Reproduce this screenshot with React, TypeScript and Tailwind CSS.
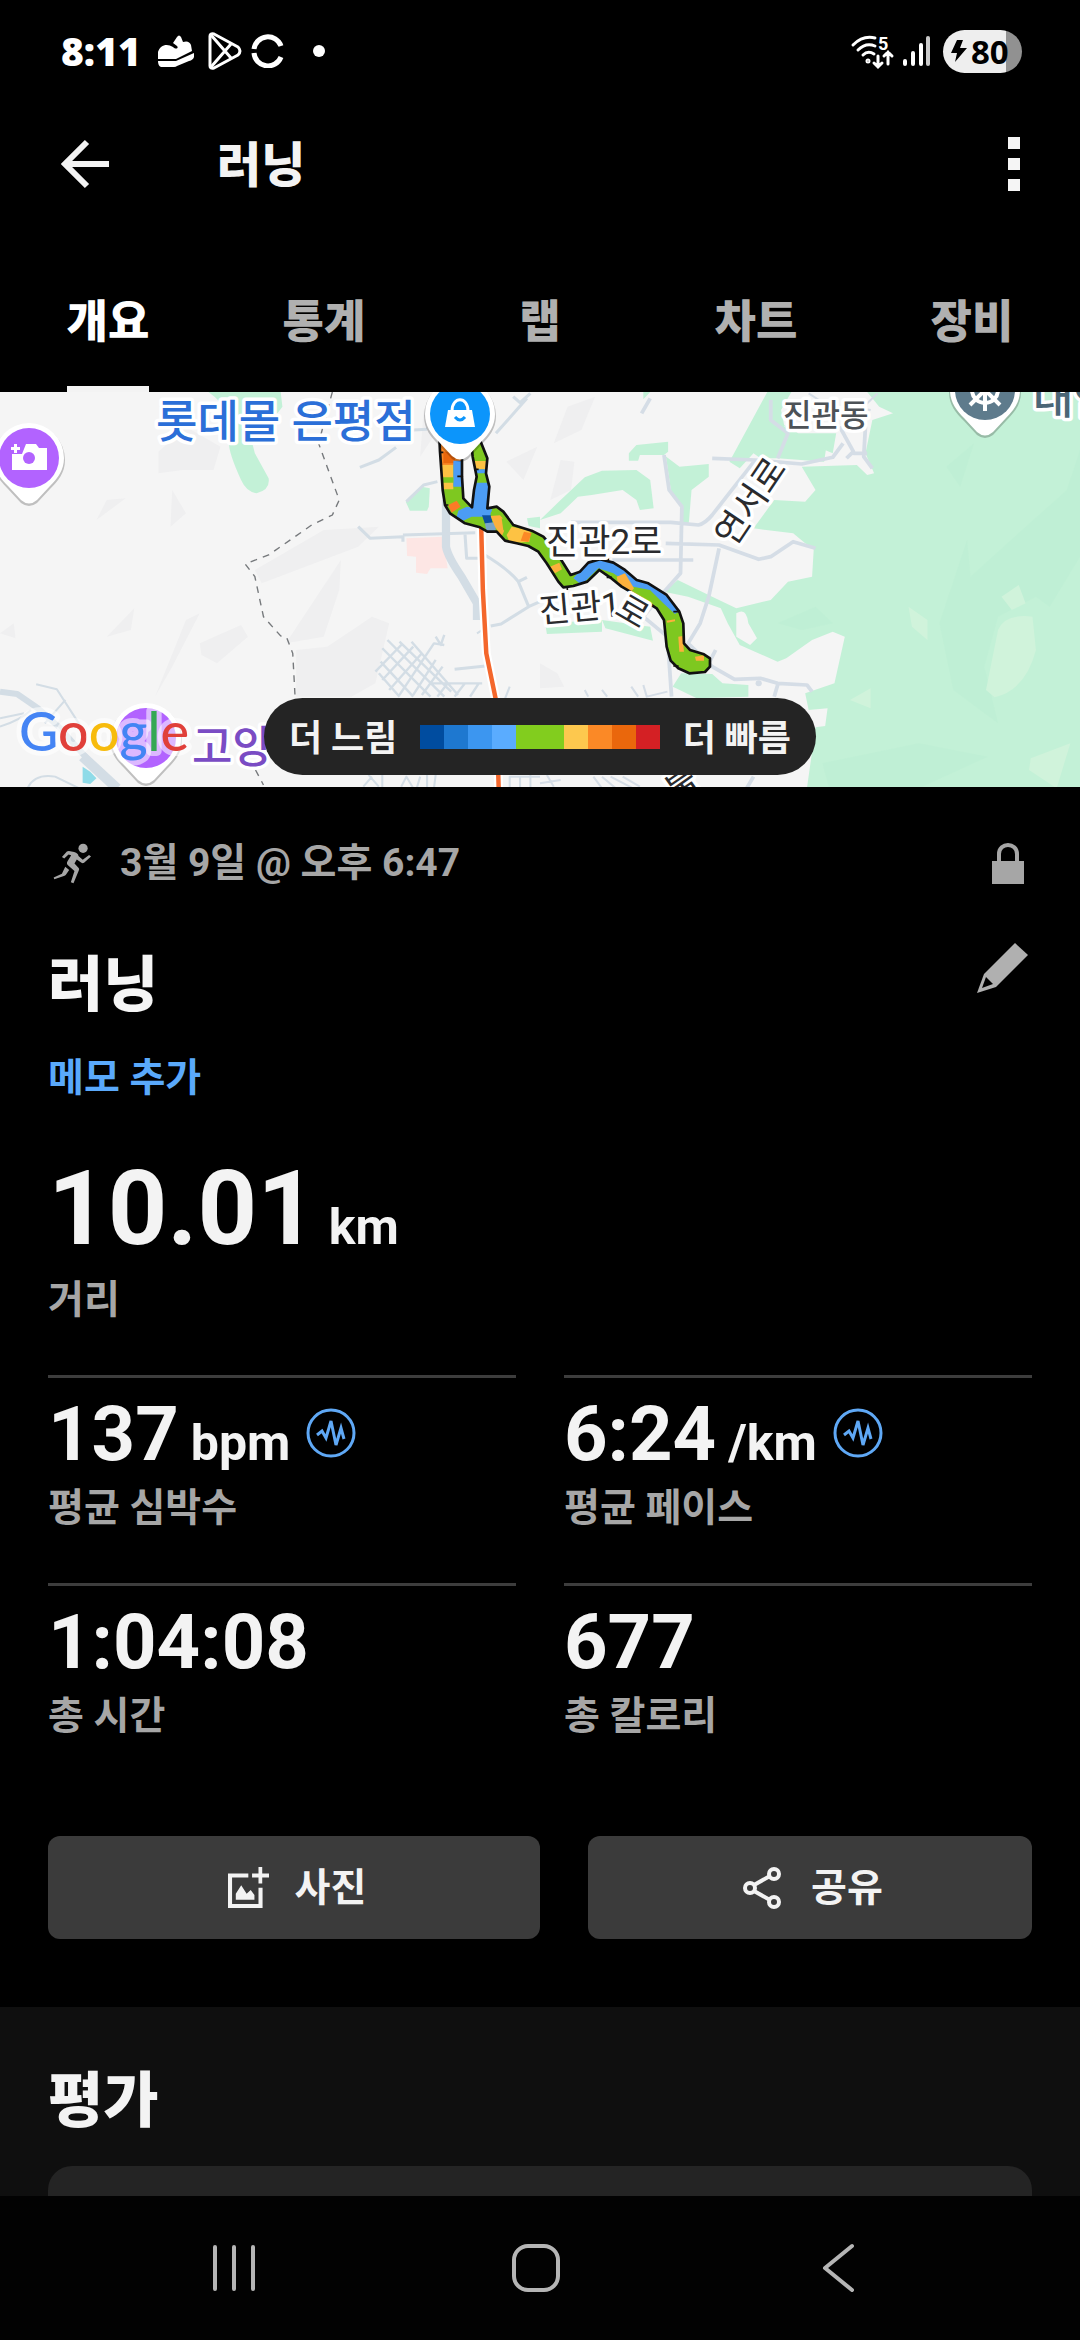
import React from "react";

const FONT = "font-['Roboto','Noto_Sans_CJK_KR',sans-serif]";

const TABS = ["개요", "통계", "랩", "차트", "장비"];

function StatusBar() {
  return (
    <header className="flex h-[102px] items-center justify-between pl-[61px] pr-[58px] text-white">
      <div className="flex items-center">
        <span className="font-['Open_Sans','Noto_Sans_CJK_KR',sans-serif] text-[39px] leading-[48px] font-extrabold">8:11</span>
        <svg className="ml-4 h-[32px] w-[38px]" viewBox="0 0 38 32" fill="currentColor" aria-hidden="true">
          <path d="M1 24V17C3 10 10 8 16 12C19 15 22 13 20 11L16 8L20 2Q22-1 24 2L26 7Q32 5 34 10L35 16L19 24Z" />
          <path d="M1 26H19L37 18V22Q36 25 32 26L20 31Q19 32 17 32H4Q1 31 1 26Z" />
        </svg>
        <svg className="ml-3 h-[40px] w-[36px]" viewBox="0 0 36 40" fill="none" stroke="currentColor" strokeWidth="3" strokeLinejoin="round" aria-hidden="true">
          <path d="M3 5Q3 2 7 3L31 16Q35 20 31 24L7 37Q3 38 3 35Z" />
          <path d="M4 4L24 27M4 36L24 13" />
        </svg>
        <svg className="ml-2 h-[34px] w-[34px]" viewBox="0 0 34 34" fill="none" stroke="currentColor" strokeWidth="5" aria-hidden="true">
          <path d="M3 15A14 14 0 0 1 30 12M3 19A14 14 0 0 0 30 23" />
        </svg>
        <span className="ml-7 size-3 rounded-full bg-white" />
      </div>
      <div className="flex items-center">
        <svg className="h-[34px] w-[42px] overflow-visible" viewBox="0 0 42 34" fill="none" stroke="currentColor" strokeLinecap="round" strokeWidth="3" aria-hidden="true">
          <path d="M2 11Q12 1 24 4M7 16Q15 8 24 12M12 21Q17 16 23 20" />
          <circle cx="17" cy="27" r="1" />
          <path d="M27 22V32M23 29L27 33L31 29M37 30V18M33 22L37 18L41 22" strokeWidth="3" />
          <text x="27" y="16" fontSize="18" fontWeight="700" fill="currentColor" stroke="none">5</text>
        </svg>
        <svg className="ml-2 h-[32px] w-[30px]" viewBox="0 0 30 32" fill="none" stroke="currentColor" strokeWidth="4" strokeLinecap="round" aria-hidden="true">
          <path d="M4 26V29M12 18V29M20 10V29" />
          <path d="M27 3V29" stroke="#c9c9c9" />
        </svg>
        <div className="ml-3 flex h-[43px] w-[79px] items-center overflow-hidden rounded-full bg-[linear-gradient(90deg,#eeeeee_80%,#919191_80%)] pl-2 text-black">
          <svg className="h-[24px] w-[16px]" viewBox="0 0 16 24" fill="currentColor" aria-hidden="true">
            <path d="M6 1H12L9 9H16L4 23L6 14H0Z" />
          </svg>
          <span className="ml-1 font-['Open_Sans',sans-serif] text-[33px] leading-[43px] font-bold">80</span>
        </div>
      </div>
    </header>
  );
}

function AppBar() {
  return (
    <div className="flex h-[124px] items-center pl-[60px] pr-[60px] text-[#f3f3f3]">
      <button type="button" aria-label="뒤로">
        <svg className="block h-[50px] w-[50px]" viewBox="0 0 50 50" fill="none" stroke="currentColor" strokeWidth="6" aria-hidden="true">
          <path d="M49 25H6M27 3L5 25L27 47" />
        </svg>
      </button>
      <h1 className="ml-[107px] flex-1 pt-1 text-[48px] leading-[60px] font-black">러닝</h1>
      <button type="button" aria-label="더보기" className="flex flex-col gap-[9px]">
        <span className="size-3 bg-[#f5f5f5]" />
        <span className="size-3 bg-[#f5f5f5]" />
        <span className="size-3 bg-[#f5f5f5]" />
      </button>
    </div>
  );
}

function Tabs() {
  return (
    <nav className="flex h-[166px]">
      {TABS.map((t, i) => (
        <button
          key={t}
          type="button"
          aria-current={i === 0 ? "page" : undefined}
          className={
            i === 0
              ? "flex flex-1 flex-col items-center text-[45px] leading-[56px] font-black text-white"
              : "flex flex-1 flex-col items-center text-[45px] leading-[56px] font-black text-[#b0b0b0]"
          }
        >
          <span className={i === 0 ? "flex h-full flex-col justify-between border-b-[6px] border-[#f3f3f3] pt-[69px]" : "pt-[69px]"}>{t}</span>
        </button>
      ))}
    </nav>
  );
}

function Pin({ x, y, color, children }: { x: number; y: number; color: string; children?: React.ReactNode }) {
  return (
    <g transform={`translate(${x} ${y})`}>
      <path d="M-36 2a36 36 0 1 1 72 0c0 13-7 21-15 29L8 45Q0 51-8 45L-21 31C-29 23-36 15-36 2z" fill="#000" opacity=".22" />
      <path d="M-35 0a35 35 0 1 1 70 0c0 12-6 20-14 28L8 42Q0 49-8 42L-21 28C-29 20-35 12-35 0z" fill="#fff" />
      <circle r="30" fill={color} />
      {children}
    </g>
  );
}

const ROUTE =
  "M118 140L120 185L125 255L128 300L135 345L150 370L195 400L240 412L262 425L290 425L315 452L350 460L385 468L415 485L440 520L475 575L490 592L520 588L562 575L598 540L630 562L665 590L720 622L770 655L792 690L800 770L812 812L835 835L868 850L915 846L930 830L930 805L912 793L870 780L852 760L850 700L838 665L800 615L745 580L710 570L675 540L640 518L600 508L565 518L540 545L512 555L490 520L465 480L430 440L395 422L340 405L310 365L290 350L262 355L268 290L258 250L262 205L240 150ZM186 150L186 260L190 325L216 352L222 300L230 260L218 200L214 160Z";

function RouteMap() {
  return (
    <svg className="block h-[395px] w-full" viewBox="0 0 1080 395" preserveAspectRatio="xMidYMid slice" role="img" aria-label="러닝 경로 지도">
      <defs>
        <clipPath id="route">
          <path d={ROUTE} clipRule="evenodd" />
        </clipPath>
      </defs>
      <rect width="1080" height="395" fill="#f5f5f5" />

      {/* western half: hill shading, parks, streets */}
      <g transform="translate(0 -2) scale(0.3444 0.3333)">
        <g fill="#efeff0">
          <path d="M460 185L540 110L640 170L620 240L530 240L460 250ZM280 390L310 330L365 325ZM500 300L540 370L495 410ZM310 740L390 655L380 720ZM450 920L540 690L580 670L500 830ZM580 760L700 705L720 740L630 820L585 795ZM830 760L900 650L990 510L985 600L940 740ZM860 780L950 770L1080 680L1130 700L1090 880L1020 920H860ZM740 540L940 420L1100 410L1040 470L760 580ZM1220 200L1290 90L1230 60ZM1470 215L1560 170L1520 270ZM0 730L40 700L45 745Z" />
        </g>
        <path d="M605 6H815L820 50Q800 80 730 150L740 190L780 265Q785 300 745 310Q715 305 700 270Q660 180 665 150L680 90Q640 30 605 6Z" fill="#c3f1d7" />
        <path d="M1178 335L1225 290L1248 295L1245 350L1240 362H1190Z" fill="#c3f1d7" />
        <path d="M1530 385L1568 380V415L1535 408Z" fill="#c3f1d7" />
        <path d="M1180 445L1285 440L1300 535L1250 535L1240 552L1208 548V500L1182 498Z" fill="#fde6e4" />
        <g fill="none" stroke="#d3dde5" strokeLinejoin="round">
          <path d="M1295 330V470Q1300 500 1340 560L1385 640V690" strokeWidth="24" />
          <path d="M0 905L50 912L110 955L170 1010L330 1195" strokeWidth="18" />
          <path d="M240 1100L340 1195" strokeWidth="30" />
          <path d="M1040 410L1075 445L1170 440V455M1170 435L1380 428M1350 430L1355 505H1400M1400 490Q1480 540 1505 575L1535 650L1455 702L1425 708M1505 575L1530 562M1535 650L1568 635M1320 838L1410 828M1200 120L1240 118M1180 335L1230 285L1270 275M1045 232L1100 210L1150 172M1440 130L1530 25M1490 20L1510 38L1540 10" strokeWidth="9" />
          <path d="M105 883L165 898L235 1010M0 985L70 970M130 1000L190 930M0 1010Q60 990 90 960M80 1195Q100 1150 160 1160L230 1195M1385 730L1400 720" strokeWidth="6" />
          <path d="M1125 750L1290 920M1110 775L1250 920M1105 815L1200 920M1100 850L1160 920M1160 755L1310 905M1195 755L1330 915M1090 845L1165 765M1110 870L1200 770M1130 900L1225 790M1160 915L1260 760L1290 765M1200 915L1265 810M1265 740L1280 765L1290 735M1225 915L1285 830M1250 880H1400M1270 920L1300 880M1320 920L1350 880M1365 920L1390 880" strokeWidth="7" />
          <path d="M1055 1190L1080 1160M1070 1155L1100 1190M1110 1155V1195M1165 1190L1180 1160L1200 1195M1220 1160L1210 1195M1240 1155V1195M1265 1155L1260 1195M1480 1195V1160H1568M1510 1160V1195M1540 1155V1195M1465 930L1480 890" strokeWidth="6" />
        </g>
        <path d="M240 1130L262 1145L280 1165L262 1182L240 1178Z" fill="#8fdbe8" />
        <path d="M965 6L925 160L985 330L965 375L905 405L780 495L712 522L740 560L765 680L815 738L832 742L850 790L857 925M742 1140L765 1185" fill="none" stroke="#76797c" strokeWidth="4" strokeDasharray="20 18" />
        <path d="M1397 400L1402 600L1412 790L1440 930L1448 1195" fill="none" stroke="#fff" strokeWidth="26" />
        <path d="M1397 400L1402 600L1412 790L1440 930L1448 1195" fill="none" stroke="#f4672c" strokeWidth="13" />
      </g>

      {/* eastern half: forest, parks, streets */}
      <g transform="translate(540 -2) scale(0.3444 0.3333)">
        <path d="M40 160L80 50L160 20L120 120ZM30 330L60 210L100 215L90 300ZM0 820L50 850L70 890L0 895Z" fill="#efeff0" />
        <g fill="#c3f1d7">
          <path d="M950 6H1568V1195H775L800 1012L828 1008L835 955L780 960L770 910L855 880L885 740L850 725L790 750L715 805L690 815L580 765L545 700L525 655L430 620L360 605L400 570L500 620L570 655L670 630L720 575L790 560L795 475L770 460L735 430L620 415L680 330L770 335L800 300L760 230L920 225L950 255L970 250L945 190L965 90L1025 70L985 50Z" />
          <path d="M660 6H730L700 60L710 110L760 140L830 180L825 215L690 205L640 205L620 190L580 235L550 215Z" />
          <path d="M700 100L750 130H860L850 190L780 160Z" />
          <path d="M258 190L280 165L372 155V185L360 195L405 230L490 222V260L440 300L432 400L412 400L408 350L380 300L365 195L290 195L285 212H258Z" />
          <path d="M0 390L60 330L130 262L180 242L280 240L320 270L330 355L290 360L280 330L240 300L150 315L110 320L60 370Z" />
          <path d="M15 700L180 690V725L20 732ZM180 690L320 710L328 752L190 715ZM385 890L410 850L500 852L530 880L605 885V920L455 925L395 895ZM300 6H320L300 28Z" />
        </g>
        <path d="M570 670Q600 650 605 700L630 745L610 765L570 740Z" fill="#f5f5f5" />
        <path d="M1160 700L1240 450L1250 560L1400 420L1530 300L1568 180V500L1480 650L1440 620L1330 680L1290 830L1330 1000L1200 900ZM1180 230L1260 160L1220 290ZM820 1120L1100 1060L1300 1100L1100 1195H840ZM690 700L800 650L850 700L760 720Z" fill="#bdeed3" opacity=".6" />
        <path d="M1330 720Q1350 670 1430 680L1440 780Q1410 900 1320 922L1295 900ZM1340 620L1390 585L1410 640L1370 660ZM1070 650L1125 690V750L1080 710ZM1425 1105L1540 1060L1500 1195L1420 1140ZM900 930L960 895L960 955Z" fill="#d0f3db" />
        <g fill="none" stroke="#d5dde6" strokeWidth="11" strokeLinejoin="round">
          <path d="M90 397H380L460 405Q480 400 500 375L625 210L760 222L850 202L880 160M365 460L520 465L635 508L670 500L735 455L800 475M210 510L445 510M690 205L720 130L670 90V30M360 195L375 300L412 350L408 550L365 600L300 680L370 740L382 920M520 475L490 620L465 700L430 760L500 830L565 868L640 865L690 880L775 885L790 905M690 885L680 920M510 780L490 820M625 210L500 205M870 110L910 185L890 205M950 190H910M945 110L940 200L965 235M295 70L320 25M600 1195L620 1160" />
          <path d="M265 890L285 920M300 885L310 920L370 905M130 900L140 920M180 900L195 920M0 1180L60 1170M20 1155L40 1190M155 1160L180 1195M180 1160L220 1195M205 1160L270 1195M240 1160L290 1190M780 10L810 30M930 60L980 10M900 50L960 60" strokeWidth="6" />
        </g>
        <circle cx="635" cy="880" r="9" fill="#d5dde6" />
      </g>

      {/* recorded track, coloured by pace */}
      <g transform="translate(400 -2) scale(0.3333)">
        <path d={ROUTE} fill="#7ec820" fillRule="evenodd" />
        <g clipPath="url(#route)">
          <path d="M110 150H190V225H110Z" fill="#fb8926" />
          <path d="M130 185H165V220H130Z" fill="#ea670c" />
          <path d="M125 225H160V298H125Z" fill="#fdc243" />
          <path d="M160 212H195V290H160Z" fill="#4c9cf4" />
          <path d="M120 262H160V278H120Z" fill="#7ec820" />
          <path d="M145 345L170 332L182 350L155 368Z" fill="#fb7b26" />
          <path d="M175 362L200 350L275 358L270 380H215L190 392L170 380Z" fill="#4c9cf4" />
          <path d="M215 213H270V238H215Z" fill="#fdc243" />
          <path d="M215 238H275V250H215ZM215 278H275V365H215Z" fill="#4c9cf4" />
          <path d="M246 376L272 376L278 398L255 402Z" fill="#0c4f9f" />
          <path d="M255 400L290 396L285 430H260Z" fill="#7aa5c8" />
          <path d="M272 378L300 376L322 400L305 440L285 410Z" fill="#fdb03c" />
          <path d="M305 385L325 390L335 440L310 420Z" fill="#7ec820" />
          <path d="M335 410L392 422L388 455L330 460L320 435Z" fill="#fdc243" />
          <path d="M372 425L395 430L385 456L362 452Z" fill="#fb8926" />
          <path d="M450 530L478 518L486 538L465 550Z" fill="#fdb03c" />
          <path d="M520 565L545 535L570 505H640L720 560L790 590L850 655L825 672L790 640L750 600L700 590L640 550L595 535L545 585Z" fill="#4c9cf4" />
          <path d="M650 560L675 550L702 595L690 610L655 585Z" fill="#fdb03c" />
          <path d="M800 692L825 688V694L802 698ZM835 740L848 738L852 785H838ZM885 800L912 796V812H888Z" fill="#fdb03c" />
        </g>
        <path d={ROUTE} fill="none" stroke="#111" strokeWidth="8" strokeLinejoin="round" />
        <path d="M120 187H130M172 259H188M222 238H236M133 345H145M820 665H838M820 828H836M625 505V515M502 588V600M620 562H636" stroke="#111" strokeWidth="5" />
      </g>

      <g stroke="#fff" strokeWidth="7" strokeLinejoin="round" paintOrder="stroke" fontWeight="500" fontFamily="'Roboto','Noto Sans CJK KR',sans-serif">
        <text x="156" y="46" fontSize="45" fill="#2b6fd8">롯데몰 은평점</text>
        <text x="783" y="34" fontSize="31" fill="#4d5257">진관동</text>
        <text x="1033" y="22" fontSize="44" fill="#4b6676">대안</text>
        <text x="192" y="371" fontSize="44" fill="#7a4cc4">고양</text>
        <g fill="#2a2b2e" fontWeight="400">
          <text x="546" y="162" fontSize="35">진관2로</text>
          <text transform="translate(540 231) rotate(-5)" fontSize="34">진관1</text>
          <text transform="translate(613 222) rotate(30)" fontSize="34">로</text>
          <text transform="translate(751 110) rotate(-56)" fontSize="35" textAnchor="middle" dominantBaseline="central">연서로</text>
          <text transform="translate(676 412) rotate(-35)" fontSize="34">불</text>
        </g>
      </g>

      <Pin x={29} y={66} color="#b263ff">
        <path d="M-17-4H-7L-3-14H7L10-10H18V12H-17ZM-15-14h3v3h3v3h-3v3h-3v-3h-3v-3h3Z" fill="#fff" />
        <circle cy="0" r="6" fill="#b263ff" />
      </Pin>
      <Pin x={460} y={22} color="#0c95fb">
        <path d="M-12-4H12L15 13H-15Z" fill="#fff" />
        <path d="M-8-3C-8-18 8-18 8-3" fill="none" stroke="#fff" strokeWidth="3" />
        <path d="M-5 3Q0 9 5 3" fill="none" stroke="#0c95fb" strokeWidth="3" />
      </Pin>
      <Pin x={985} y={-2} color="#5e7b8c">
        <g fill="none" stroke="#fff" strokeWidth="4">
          <circle r="13" />
          <path d="M0-21V21M-21 0H21M-15-15L15 15M-15 15L15-15" />
        </g>
      </Pin>
      <Pin x={146} y={346} color="#b263ff" />

      <text
        x="19"
        y="359"
        fontFamily="'Lato',sans-serif"
        fontSize="54"
        fontWeight="500"
        stroke="#fff"
        strokeOpacity=".55"
        strokeWidth="10"
        strokeLinejoin="round"
        paintOrder="stroke"
      >
        <tspan fill="#4484f4">G</tspan>
        <tspan fill="#e0403a">o</tspan>
        <tspan fill="#f7bb0c">o</tspan>
        <tspan fill="#4484f4">g</tspan>
        <tspan fill="#34a853">l</tspan>
        <tspan fill="#e0403a">e</tspan>
      </text>
    </svg>
  );
}

function PaceLegend() {
  return (
    <div className="absolute bottom-3 left-1/2 flex h-[77px] w-[552px] -translate-x-1/2 items-center justify-between rounded-full bg-[#242424] px-[25px] text-[36px] leading-[44px] font-bold whitespace-nowrap text-[#f3f3f3]">
      <span className="pt-1">더 느림</span>
      <span className="flex h-6 w-60">
        <span className="flex-1 bg-[#004c9f]" />
        <span className="flex-1 bg-[#1e78d0]" />
        <span className="flex-1 bg-[#3c96f0]" />
        <span className="flex-1 bg-[#5aacff]" />
        <span className="flex-[2] bg-[#82cd1e]" />
        <span className="flex-1 bg-[#fdc84e]" />
        <span className="flex-1 bg-[#fb8926]" />
        <span className="flex-1 bg-[#ea670c]" />
        <span className="flex-1 bg-[#d42024]" />
      </span>
      <span className="pt-1">더 빠름</span>
    </div>
  );
}

function PulseButton() {
  return (
    <button type="button" aria-label="차트 보기" className="ml-4 self-center text-[#5fa8f5]">
      <svg className="block size-[50px]" viewBox="0 0 50 50" fill="none" stroke="currentColor" strokeWidth="3" aria-hidden="true">
        <circle cx="25" cy="25" r="23" />
        <path d="M11 27L16 23L20 30L25 13L30 37L35 20L38 31" />
      </svg>
    </button>
  );
}

function Stat({ value, unit, label, pulse }: { value: string; unit?: string; label: string; pulse?: boolean }) {
  return (
    <div className="border-t-[3px] border-[#3d3d3d] pt-4 pb-[51px]">
      <div className="flex h-[78px] items-baseline font-bold text-[#f3f3f3]">
        <span className="text-[76px] leading-[80px]">{value}</span>
        {unit && <span className="ml-3 text-[50px] leading-[60px]">{unit}</span>}
        {pulse && <PulseButton />}
      </div>
      <p className="mt-3 text-[39px] leading-[48px] font-bold text-[#a6a6a6]">{label}</p>
    </div>
  );
}

function Summary() {
  return (
    <main className="px-12 pt-[52px] pb-[68px]">
      <div className="flex h-12 items-center justify-between text-[#a6a6a6]">
        <div className="flex items-center pl-[5px]">
          <svg className="h-[41px] w-[39px]" viewBox="42 36 116 124" fill="currentColor" aria-hidden="true">
            <circle cx="132" cy="52" r="14" />
            <path d="M68 78L83 62Q85 60 89 60L105 63Q118 68 118 75L131 87L150 72L156 77L135 96Q131 99 127 96L113 86L106 98L118 111Q122 114 119 119L103 158L95 155L106 121L88 105Q80 99 85 91L96 73L88 71L75 83Z" />
            <path d="M78 108L90 118L80 132Q78 135 74 136L45 146L43 140L68 129Z" />
          </svg>
          <span className="ml-7 text-[39px] leading-[48px] font-bold">3월 9일 @ 오후 6:47</span>
        </div>
        <svg className="mr-2 h-[41px] w-[32px]" viewBox="0 0 32 41" aria-label="비공개" role="img">
          <path d="M7 20V11C7-1 25-1 25 11V20" fill="none" stroke="currentColor" strokeWidth="4" />
          <path d="M0 18H32V41H0Z" fill="currentColor" />
        </svg>
      </div>

      <div className="mt-[56px] flex items-start justify-between">
        <h2 className="mt-[7px] text-[60px] leading-[72px] font-black text-[#f5f5f5]">러닝</h2>
        <button type="button" aria-label="편집" className="mr-1 text-[#b0b0b0]">
          <svg className="block h-[50px] w-[51px]" viewBox="0 0 51 50" aria-hidden="true">
            <path d="M38 0L51 12L19 44L0 50L7 31Z" fill="currentColor" />
            <path d="M9 34L16 41L5 45Z" fill="#000" />
          </svg>
        </button>
      </div>
      <button type="button" className="mt-8 block text-[39px] leading-[48px] font-bold text-[#5aa9fb]">메모 추가</button>

      <div className="mt-[53px] flex items-baseline gap-3 font-bold text-[#f3f3f3]">
        <span className="text-[104px] leading-[108px]">10.01</span>
        <span className="text-[50px] leading-[60px]">km</span>
      </div>
      <p className="mt-[13px] mb-[51px] text-[39px] leading-[48px] font-bold text-[#a6a6a6]">거리</p>

      <div className="grid grid-cols-2 gap-x-12">
        <Stat value="137" unit="bpm" label="평균 심박수" pulse />
        <Stat value="6:24" unit="/km" label="평균 페이스" pulse />
        <Stat value="1:04:08" label="총 시간" />
        <Stat value="677" label="총 칼로리" />
      </div>

      <div className="mt-[45px] grid grid-cols-[41fr_37fr] gap-12 text-[39px] leading-[48px] font-bold text-[#f3f3f3]">
        <button type="button" className="flex h-[103px] items-center justify-center gap-[26px] rounded-xl bg-[#3b3b3b] pl-1.5">
          <svg className="h-[41px] w-[41px]" viewBox="57 47 121 121" fill="currentColor" aria-hidden="true">
            <path d="M57 66H117V78H69V156H147V108H159V168H57Z" />
            <path d="M147 47H158V66H178V78H158V96H147V78H128V66H147Z" />
            <path d="M80 144V126L96 101L112 126L124 115L135 130V144Z" />
          </svg>
          사진
        </button>
        <button type="button" className="flex h-[103px] items-center justify-center gap-[30px] rounded-xl bg-[#3b3b3b] pl-1.5">
          <svg className="h-[42px] w-[38px]" viewBox="0 0 38 42" fill="none" stroke="currentColor" strokeWidth="4" aria-hidden="true">
            <circle cx="31" cy="7" r="5" />
            <circle cx="7" cy="21" r="5" />
            <circle cx="31" cy="35" r="5" />
            <path d="M11 18L27 9M11 24L27 33" />
          </svg>
          공유
        </button>
      </div>
    </main>
  );
}

function SystemNav() {
  return (
    <nav className="flex h-36 items-center justify-around bg-[#020202] pl-[83px] pr-[91px] text-[#b5b5b5]">
      <button type="button" aria-label="최근 앱">
        <svg className="block h-[50px] w-[50px]" viewBox="0 0 50 50" fill="none" stroke="currentColor" strokeWidth="4" strokeLinecap="round" aria-hidden="true">
          <path d="M6 4V46M25 4V46M44 4V46" />
        </svg>
      </button>
      <button type="button" aria-label="홈">
        <svg className="block h-[50px] w-[50px]" viewBox="0 0 50 50" fill="none" stroke="currentColor" strokeWidth="4" aria-hidden="true">
          <rect x="3" y="3" width="44" height="44" rx="14" />
        </svg>
      </button>
      <button type="button" aria-label="뒤로 가기">
        <svg className="block h-[50px] w-[50px]" viewBox="0 0 50 50" fill="none" stroke="currentColor" strokeWidth="4" strokeLinecap="round" strokeLinejoin="round" aria-hidden="true">
          <path d="M39 3L12 25L39 47" />
        </svg>
      </button>
    </nav>
  );
}

export default function App() {
  return (
    <div className={`${FONT} flex min-h-screen flex-col bg-black`} lang="ko">
      <StatusBar />
      <AppBar />
      <Tabs />
      <div className="relative overflow-hidden">
        <RouteMap />
        <PaceLegend />
      </div>
      <Summary />
      <section className="flex flex-1 flex-col bg-[#0f0f0f] px-12 pt-[59px]">
        <h2 className="text-[60px] leading-[72px] font-black text-[#f3f3f3]">평가</h2>
        <div className="mt-7 min-h-[30px] flex-1 rounded-t-3xl bg-[#242424]" />
      </section>
      <SystemNav />
    </div>
  );
}
